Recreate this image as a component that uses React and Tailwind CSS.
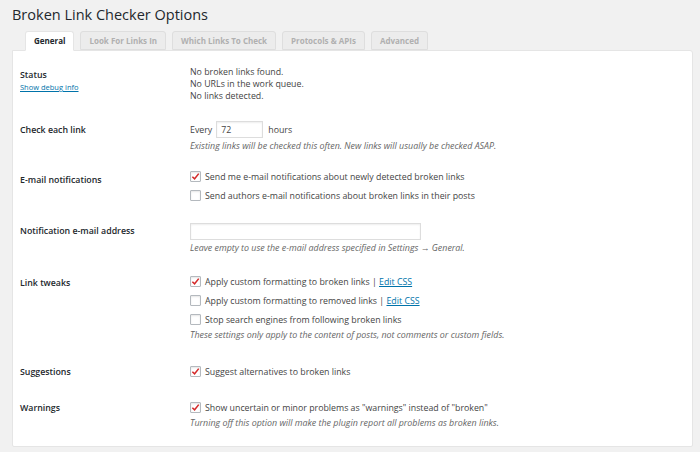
const TABS = ["General", "Look For Links In", "Which Links To Check", "Protocols & APIs", "Advanced"];

function Box({ checked }) {
  return (
    <span className="w-[11px] h-[11px] shrink-0 border border-[#b4b9be] bg-white rounded-[1px] shadow-[inset_0_1px_2px_rgba(0,0,0,0.1)] flex items-center justify-center">
      {checked && (
        <svg width="9" height="9" viewBox="0 0 10 10">
          <path d="M1.5 5.2 L4 7.6 L8.6 1.8" fill="none" stroke="#d42a2a" strokeWidth="1.7" />
        </svg>
      )}
    </span>
  );
}

function CheckRow({ checked, children }) {
  return (
    <div className="h-[19px] flex items-center gap-[4px]">
      <Box checked={checked} />
      <span>{children}</span>
    </div>
  );
}

function Desc({ children }) {
  return <div className="h-[12px] leading-[12px] italic text-[#666] text-[8.9px]">{children}</div>;
}

function Row({ label, extra, mt, lt, children }) {
  return (
    <div className="flex" style={{ marginTop: mt }}>
      <div className="w-[170px] shrink-0" style={{ paddingTop: lt }}>
        <div className="font-semibold text-[#23282d] text-[8.8px] leading-[12px]">{label}</div>
        {extra}
      </div>
      <div className="flex-1">{children}</div>
    </div>
  );
}

export default function App() {
  return (
    <div className="w-[700px] h-[452px] bg-[#f1f1f1] text-[#444] text-[8.8px] leading-[12px] overflow-hidden" style={{ fontFamily: '"Open Sans", sans-serif' }}>
      <div className="pl-[12px] pt-[4px] text-[14.5px] leading-[22px] text-[#23282d]">Broken Link Checker Options</div>
      <div className="flex gap-[6px] pl-[25px] mt-[5px] h-[19px] items-end">
        {TABS.map((t, i) => (
          <div
            key={t}
            className={
              i === 0
                ? "h-[20px] -mb-px px-[8px] flex items-center font-bold text-[8px] text-[#23282d] bg-white border border-[#e5e5e5] border-b-white rounded-t-[3px] relative z-10"
                : "h-[19px] px-[8px] flex items-center font-bold text-[8px] text-[#b0b0b0] bg-[#ececec] border border-[#dedede] rounded-t-[3px]"
            }
          >
            {t}
          </div>
        ))}
      </div>
      <div className="ml-[12px] w-[681px] h-[397px] bg-white border border-[#e5e5e5] rounded-tr-[3px] rounded-b-[2px] pl-[7px] pt-[15px]">
        <Row
          label="Status"
          lt={3}
          mt={0}
          extra={<div className="text-[7.5px] leading-[12px] text-[#0073aa] underline">Show debug info</div>}
        >
          <div>No broken links found.</div>
          <div>No URLs in the work queue.</div>
          <div>No links detected.</div>
        </Row>
        <Row label="Check each link" lt={3} mt={19}>
          <div className="flex items-center h-[17px]">
            <span>Every</span>
            <span className="ml-[4px] w-[47px] h-[17px] border border-[#ddd] shadow-[inset_0_1px_2px_rgba(0,0,0,0.07)] pl-[4px] flex items-center">72</span>
            <span className="ml-[5px]">hours</span>
          </div>
          <div className="mt-[2px]">
            <Desc>Existing links will be checked this often. New links will usually be checked ASAP.</Desc>
          </div>
        </Row>
        <Row label="E-mail notifications" lt={7} mt={15}>
          <CheckRow checked>Send me e-mail notifications about newly detected broken links</CheckRow>
          <CheckRow>Send authors e-mail notifications about broken links in their posts</CheckRow>
        </Row>
        <Row label="Notification e-mail address" lt={2} mt={18}>
          <div className="w-[231px] h-[17px] border border-[#ddd] shadow-[inset_0_1px_2px_rgba(0,0,0,0.07)]" />
          <div className="mt-[2px]">
            <Desc>Leave empty to use the e-mail address specified in Settings → General.</Desc>
          </div>
        </Row>
        <Row label="Link tweaks" lt={5} mt={18}>
          <CheckRow checked>
            Apply custom formatting to broken links | <span className="text-[#0073aa] underline">Edit CSS</span>
          </CheckRow>
          <CheckRow>
            Apply custom formatting to removed links | <span className="text-[#0073aa] underline">Edit CSS</span>
          </CheckRow>
          <CheckRow>Stop search engines from following broken links</CheckRow>
          <Desc>These settings only apply to the content of posts, not comments or custom fields.</Desc>
        </Row>
        <Row label="Suggestions" lt={4} mt={21}>
          <CheckRow checked>Suggest alternatives to broken links</CheckRow>
        </Row>
        <Row label="Warnings" lt={4} mt={17}>
          <CheckRow checked>Show uncertain or minor problems as "warnings" instead of "broken"</CheckRow>
          <Desc>Turning off this option will make the plugin report all problems as broken links.</Desc>
        </Row>
      </div>
    </div>
  );
}
